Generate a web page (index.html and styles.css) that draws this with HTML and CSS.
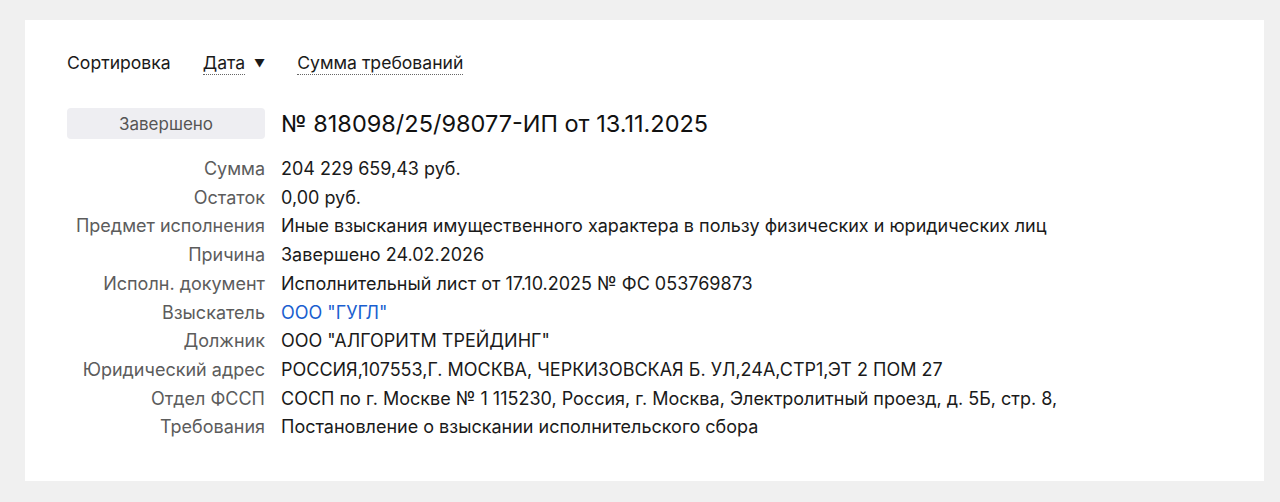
FILE: index.html
```html
<!DOCTYPE html>
<html lang="ru">
<head>
<meta charset="utf-8">
<link rel="stylesheet" href="styles.css">
</head>
<body>
<div class="card">
  <div class="sort">
    <span class="sort-label">Сортировка</span>
    <span class="sort-item"><span class="dotted">Дата</span><span class="arrow">▼</span></span>
    <span class="sort-item"><span class="dotted">Сумма требований</span></span>
  </div>
  <div class="head">
    <div class="badge">Завершено</div>
    <div class="title">№ 818098/25/98077-ИП от 13.11.2025</div>
  </div>
  <div class="rows">
    <div class="label">Сумма</div><div class="value">204 229 659,43 руб.</div>
    <div class="label">Остаток</div><div class="value">0,00 руб.</div>
    <div class="label">Предмет исполнения</div><div class="value">Иные взыскания имущественного характера в пользу физических и юридических лиц</div>
    <div class="label">Причина</div><div class="value">Завершено 24.02.2026</div>
    <div class="label">Исполн. документ</div><div class="value">Исполнительный лист от 17.10.2025 № ФС 053769873</div>
    <div class="label">Взыскатель</div><div class="value link">ООО "ГУГЛ"</div>
    <div class="label">Должник</div><div class="value">ООО "АЛГОРИТМ ТРЕЙДИНГ"</div>
    <div class="label">Юридический адрес</div><div class="value">РОССИЯ,107553,Г. МОСКВА, ЧЕРКИЗОВСКАЯ Б. УЛ,24А,СТР1,ЭТ 2 ПОМ 27</div>
    <div class="label">Отдел ФССП</div><div class="value">СОСП по г. Москве № 1 115230, Россия, г. Москва, Электролитный проезд, д. 5Б, стр. 8,</div>
    <div class="label">Требования</div><div class="value">Постановление о взыскании исполнительского сбора</div>
  </div>
</div>
</body>
</html>
```
FILE: styles.css
```css
html, body {
  margin: 0;
  padding: 0;
  background: #f0f0f0;
}
body {
  padding: 20px 16px 21px 25px;
  font-family: Inter, "Noto Sans", sans-serif;
  color: #1a1a1a;
}
.card {
  background: #fff;
  height: 461px;
  box-sizing: border-box;
  padding: 31px 42px 0 42px;
}
.sort {
  display: flex;
  align-items: center;
  font-size: 17.6px;
  line-height: 24px;
  height: 24px;
  color: #1a1a1a;
}
.sort-label {
  margin-right: 32px;
}
.sort-item {
  display: inline-flex;
  align-items: center;
  margin-right: 32px;
}
.dotted {
  border-bottom: 1px dotted #666;
  line-height: 22px;
}
.arrow {
  font-size: 11px;
  margin-left: 9px;
}
.head {
  display: flex;
  align-items: center;
  margin-top: 33px;
  gap: 16px;
}
.badge {
  width: 198px;
  height: 31px;
  background: #eeeef2;
  border-radius: 4px;
  color: #555;
  font-size: 17px;
  display: flex;
  align-items: center;
  justify-content: center;
}
.title {
  font-size: 23.5px;
  line-height: 31px;
  color: #111;
}
.rows {
  display: grid;
  grid-template-columns: 198px auto;
  column-gap: 16px;
  margin-top: 16px;
  font-size: 18px;
  line-height: 28.7px;
}
.label {
  text-align: right;
  color: #5c5c5c;
}
.value {
  color: #1a1a1a;
}
.link {
  color: #1a5fd0;
}
```
